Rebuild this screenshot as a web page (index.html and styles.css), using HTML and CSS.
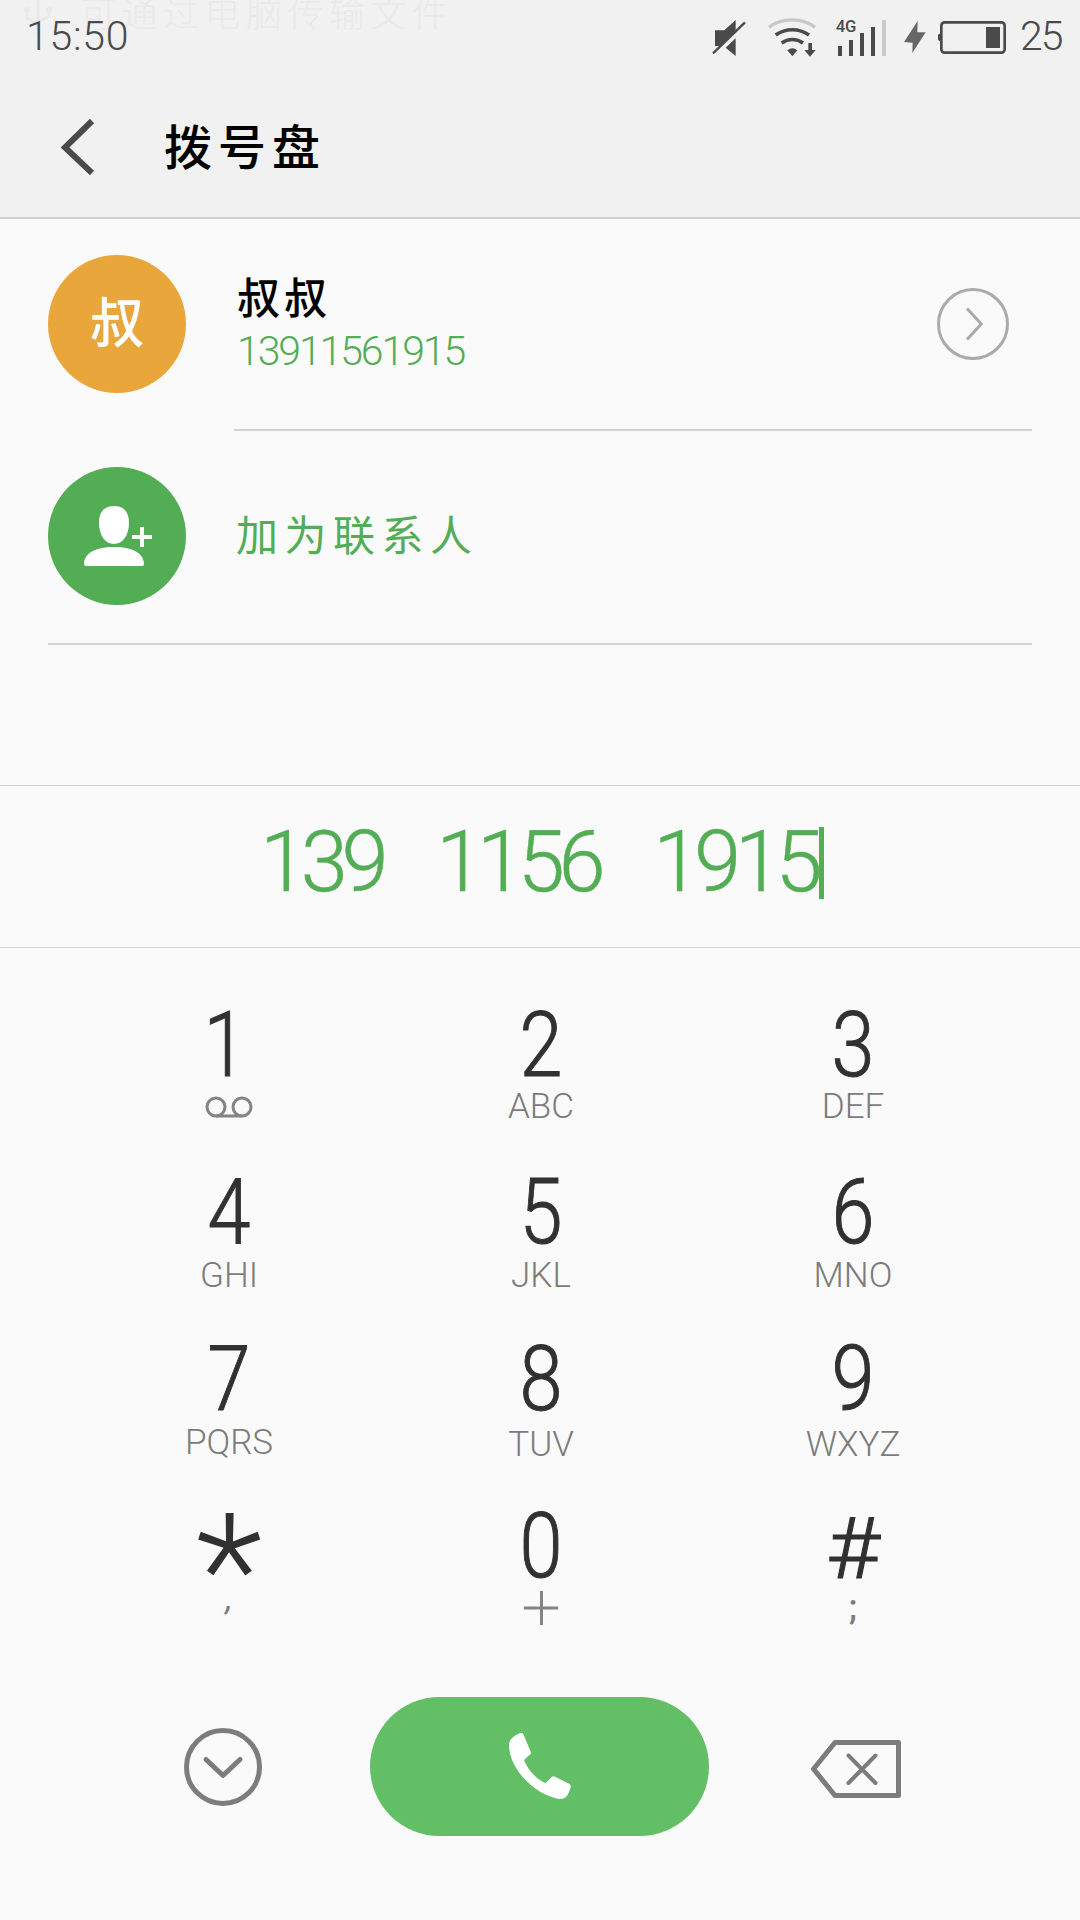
FILE: index.html
```html
<!DOCTYPE html>
<html lang="zh-CN">
<head>
<meta charset="utf-8">
<title>拨号盘</title>
<link rel="stylesheet" href="styles.css">
</head>
<body>
<div class="phone">
  <header class="header">
    <div class="ticker">
      <svg class="ticker-usb" width="28" height="36" viewBox="0 0 28 36"><path d="M14 0V34M3 8V18L14 24M25 8V16L14 22"/><circle cx="3" cy="10" r="3"/><circle cx="25" cy="10" r="3"/></svg>
      <span>可通过电脑传输文件</span>
    </div>
    <div class="status">
      <span class="clock">15:50</span>
      <div class="status-icons">
        <svg class="mute" width="40" height="80" viewBox="60 0 120 240"><path class="fill" d="M75 91H103L137 60V92L90 138H75ZM137 115V168L107 143Z"/><path class="slash" d="M69 160L165 67"/></svg>
        <svg class="wifi" width="52" height="80" viewBox="228 0 156 240"><path class="dim" d="M237 82C275 52 337 52 375 82"/><path class="arc" d="M257 105C287 84 327 84 357 105M275 129C294 115 320 115 339 129"/><path class="fill" d="M292 151Q307 138 322 151L307 169ZM355 129H366V150H377L360 170L343 150H355Z"/></svg>
        <svg class="signal" width="54" height="80" viewBox="432 0 162 240"><text x="437" y="96">4G</text><path class="fill" d="M444 138H456V168H444ZM477 120H489V168H477ZM510 99H522V168H510ZM543 81H555V168H543Z"/><path class="fill-dim" d="M576 60H588V168H576Z"/></svg>
        <svg class="bolt" width="26" height="80" viewBox="636 0 78 240"><path d="M683 63L642 126L668 128L667 159L707 97L682 97Z"/></svg>
        <svg class="battery" width="72" height="80" viewBox="738 0 216 240"><rect class="case" x="754" y="67" width="190" height="91" rx="10"/><path class="fill" d="M744 104L751 100V124L744 120ZM888 81H930V144H888Z"/></svg>
        <span class="percent">25</span>
      </div>
    </div>
    <div class="titlebar">
      <svg class="back" width="36" height="60" viewBox="0 0 36 60"><path d="M32 4L5 30.500L32 56"/></svg>
      <h1>拨号盘</h1>
    </div>
  </header>

  <main>
    <section class="contacts">
      <div class="contact">
        <div class="avatar avatar-orange">叔</div>
        <div class="contact-body">
          <div class="contact-text">
            <div class="name">叔叔</div>
            <div class="number">13911561915</div>
          </div>
          <svg class="detail" width="72" height="72" viewBox="0 0 72 72"><circle cx="36" cy="36" r="34.5"/><path d="M30 20.5L44.3 36L30 51.5"/></svg>
        </div>
      </div>
      <div class="contact contact-add">
        <div class="avatar avatar-green">
          <svg width="138" height="138" viewBox="0 0 138 138"><path d="M66 39C76 39 81 45 81 56C81 68 75 77 66 77C57 77 51 68 51 56C51 45 56 39 66 39ZM66 80C86 80 96 87 96 97Q96 99 94 99H38Q36 99 36 97C36 87 46 80 66 80ZM92 60H96V68H104V72H96V80H92V72H84V68H92Z"/></svg>
        </div>
        <div class="add-label">加为联系人</div>
      </div>
    </section>

    <section class="entry">
      <span class="entry-group">139</span>
      <span class="entry-group">1156</span>
      <span class="entry-group">1915</span>
      <span class="caret"></span>
    </section>

    <section class="keypad">
      <div class="key"><span class="digit digit-one">1</span><span class="sub"><svg width="48" height="22" viewBox="0 0 48 22"><circle cx="11" cy="11" r="9"/><circle cx="37" cy="11" r="9"/><path d="M11 20H37"/></svg></span></div>
      <div class="key"><span class="digit">2</span><span class="sub">ABC</span></div>
      <div class="key"><span class="digit">3</span><span class="sub">DEF</span></div>
      <div class="key key-r2"><span class="digit">4</span><span class="sub">GHI</span></div>
      <div class="key key-r2"><span class="digit">5</span><span class="sub">JKL</span></div>
      <div class="key key-r2"><span class="digit">6</span><span class="sub">MNO</span></div>
      <div class="key key-r2"><span class="digit">7</span><span class="sub">PQRS</span></div>
      <div class="key key-r3"><span class="digit">8</span><span class="sub">TUV</span></div>
      <div class="key key-r3"><span class="digit">9</span><span class="sub">WXYZ</span></div>
      <div class="key"><span class="digit star">*</span><span class="sub comma">,</span></div>
      <div class="key"><span class="digit">0</span><span class="sub plus"><svg width="34" height="34" viewBox="0 0 34 34"><path d="M17.5 0V34M0 17H34"/></svg></span></div>
      <div class="key"><span class="digit hash">#</span><span class="sub semi">;</span></div>
    </section>

    <section class="actions">
      <svg class="collapse" width="78" height="78" viewBox="0 0 78 78"><circle cx="39" cy="39" r="36.5"/><path d="M22 31.5L39 47.5L56 31.5"/></svg>
      <div class="call"><svg width="62" height="67" viewBox="0 0 62 67"><path d="M0 12C0 6 5 3 10 .5Q13.500 -1 14.500 1.500L21.800 19Q22.300 20.500 21 21.500L15 27C19 37 27 45.500 35 49.500Q37 50.500 38 48.500L43 43.800Q44 42.800 45.500 43.500L60.500 51Q62.300 52 61.700 54C60 60 57.500 67 50 66C24 61 0 35 0 12Z"/></svg></div>
      <svg class="erase" width="92" height="60" viewBox="0 0 92 60"><path d="M3.500 30L25 3.500H88.500V56.500H25Z"/><path class="cross" d="M38.500 16.500L65.500 44M65.500 16.500L38.500 44"/></svg>
    </section>
  </main>
</div>
</body>
</html>
```
FILE: styles.css
```css
* { box-sizing: border-box; }

body {
  margin: 0;
  background: #fafafa;
  font-family: Roboto, "Noto Sans CJK SC", sans-serif;
}

svg { display: block; }

.phone {
  width: 1080px;
  height: 1920px;
  overflow: hidden;
}

/* header */
.header {
  position: relative;
  height: 219px;
  background: #f1f1f1;
  border-bottom: 2px solid #cfcfcf;
}

.ticker {
  position: absolute;
  left: 24px;
  top: 0;
  display: flex;
  gap: 28px;
  height: 34px;
  font-size: 36px;
  font-weight: 300;
  line-height: 30px;
  letter-spacing: 5.5px;
  color: #e9e9e9;
}

.ticker-usb { fill: #e9e9e9; }
.ticker-usb path { fill: none; stroke: #e9e9e9; stroke-width: 3; }

.status {
  position: relative;
  display: flex;
  justify-content: space-between;
  height: 80px;
  padding: 0 17px 0 26px;
  font-size: 41px;
  font-weight: 300;
  line-height: 72px;
  color: #4a4a4a;
}

.clock { letter-spacing: 0.7px; }
.status-icons { display: flex; }
.status-icons .fill { fill: #4a4a4a; }
.slash { fill: none; stroke: #4a4a4a; stroke-width: 7; }
.wifi { margin-left: 16px; }
.dim { fill: none; stroke: #c9c9c9; stroke-width: 10; }
.arc { fill: none; stroke: #4a4a4a; stroke-width: 11; }
.signal { margin-left: 16px; }
.signal text { font: 500 50px Roboto, sans-serif; fill: #4a4a4a; }
.fill-dim { fill: #c9c9c9; }
.bolt { margin-left: 14px; fill: #666; }
.battery { margin-left: 8px; }
.case { fill: none; stroke: #4a4a4a; stroke-width: 8; }
.percent { width: 43px; margin-left: 12px; letter-spacing: -2px; }

.titlebar {
  display: flex;
  align-items: center;
  height: 134px;
  padding-left: 60px;
}

.back { fill: none; stroke: #4a4a4a; stroke-width: 6; }

h1 {
  margin: 3px 0 0 68px;
  font-size: 48px;
  font-weight: 500;
  line-height: 60px;
  letter-spacing: 6px;
  color: #000;
}

/* contacts */
.contacts {
  height: 566px;
  padding: 0 48px;
}

.contact {
  display: flex;
  align-items: center;
  gap: 48px;
  height: 212px;
}

.avatar {
  width: 138px;
  height: 138px;
  margin-bottom: 2px;
  border-radius: 50%;
  font-size: 54px;
  font-weight: 500;
  line-height: 140px;
  text-align: center;
  color: #fff;
}

.avatar-orange { background: #e8a63b; }
.avatar-green { background: #53ad54; }
.avatar svg { fill: #fff; }

.contact-body {
  display: flex;
  flex: 1;
  align-items: center;
  justify-content: space-between;
  height: 212px;
  padding: 0 23px 0 3px;
  border-bottom: 2px solid #d2d2d2;
}

.name {
  height: 54px;
  font-size: 43px;
  font-weight: 500;
  line-height: 55px;
  letter-spacing: 4px;
  color: #000;
}

.number {
  font-size: 41px;
  font-weight: 300;
  line-height: 50px;
  letter-spacing: -2.1px;
  color: #53ad54;
}

.detail { fill: none; stroke: #aaa; stroke-width: 3; }

.contact-add {
  height: 214px;
  border-bottom: 2px solid #d2d2d2;
}

.add-label {
  padding-left: 2px;
  font-size: 42px;
  line-height: 60px;
  letter-spacing: 6.5px;
  color: #53ad54;
}

/* number entry */
.entry {
  display: flex;
  align-items: center;
  height: 163px;
  padding-left: 260px;
  border: solid #d2d2d2;
  border-width: 1px 0;
  font-size: 85px;
  font-weight: 300;
  line-height: 100px;
  letter-spacing: -6.4px;
  color: #53ad54;
  -webkit-text-stroke: 0.5px #53ad54;
}

.entry-group { margin-right: 54px; margin-top: -10px; }
.entry-group:nth-child(3) { margin-right: 0; }
.caret { width: 5px; height: 72px; background: #53ad54; margin: 0 0 8px 3px; }

/* keypad */
.keypad {
  display: grid;
  grid-template-columns: repeat(3, 312px);
  grid-auto-rows: 167px;
  height: 731px;
  padding: 57px 0 0 73px;
}

.key {
  display: flex;
  flex-direction: column;
  align-items: center;
}

.digit {
  height: 81px;
  font-size: 90px;
  font-weight: 300;
  line-height: 81px;
  color: #313131;
  transform: scaleX(0.86);
  -webkit-text-stroke: 1px #313131;
}

.digit-one { margin-right: 9px; }

.sub {
  display: flex;
  align-items: center;
  height: 42px;
  font-size: 35px;
  font-weight: 300;
  line-height: 42px;
  color: #7c7c7c;
}

.sub svg { fill: none; stroke: #848484; stroke-width: 3; }
.key-r2 .sub { margin-top: 2px; }
.key-r3 .sub { margin-top: 4px; }
.star { font-size: 156px; line-height: 129px; transform: none; -webkit-text-stroke: 0; }
.hash { line-height: 86px; font-size: 86px; transform: scaleX(1.08); }
.comma { line-height: 24px; align-items: flex-start; font-weight: 400; font-style: italic; }
.semi { font-weight: 500; }

/* bottom actions */
.actions {
  display: flex;
  align-items: center;
  height: 175px;
  padding-left: 184px;
}

.collapse, .erase {
  fill: none;
  stroke: #7c7c7c;
  stroke-width: 5;
  stroke-linejoin: round;
  stroke-linecap: round;
}

.cross { stroke-width: 4; }

.call {
  display: flex;
  align-items: center;
  justify-content: center;
  width: 339px;
  height: 139px;
  margin: 0 101px 0 108px;
  border-radius: 70px;
  background: #62bf65;
}

.call svg { fill: #fff; }
.erase { margin-top: 4px; }
```
